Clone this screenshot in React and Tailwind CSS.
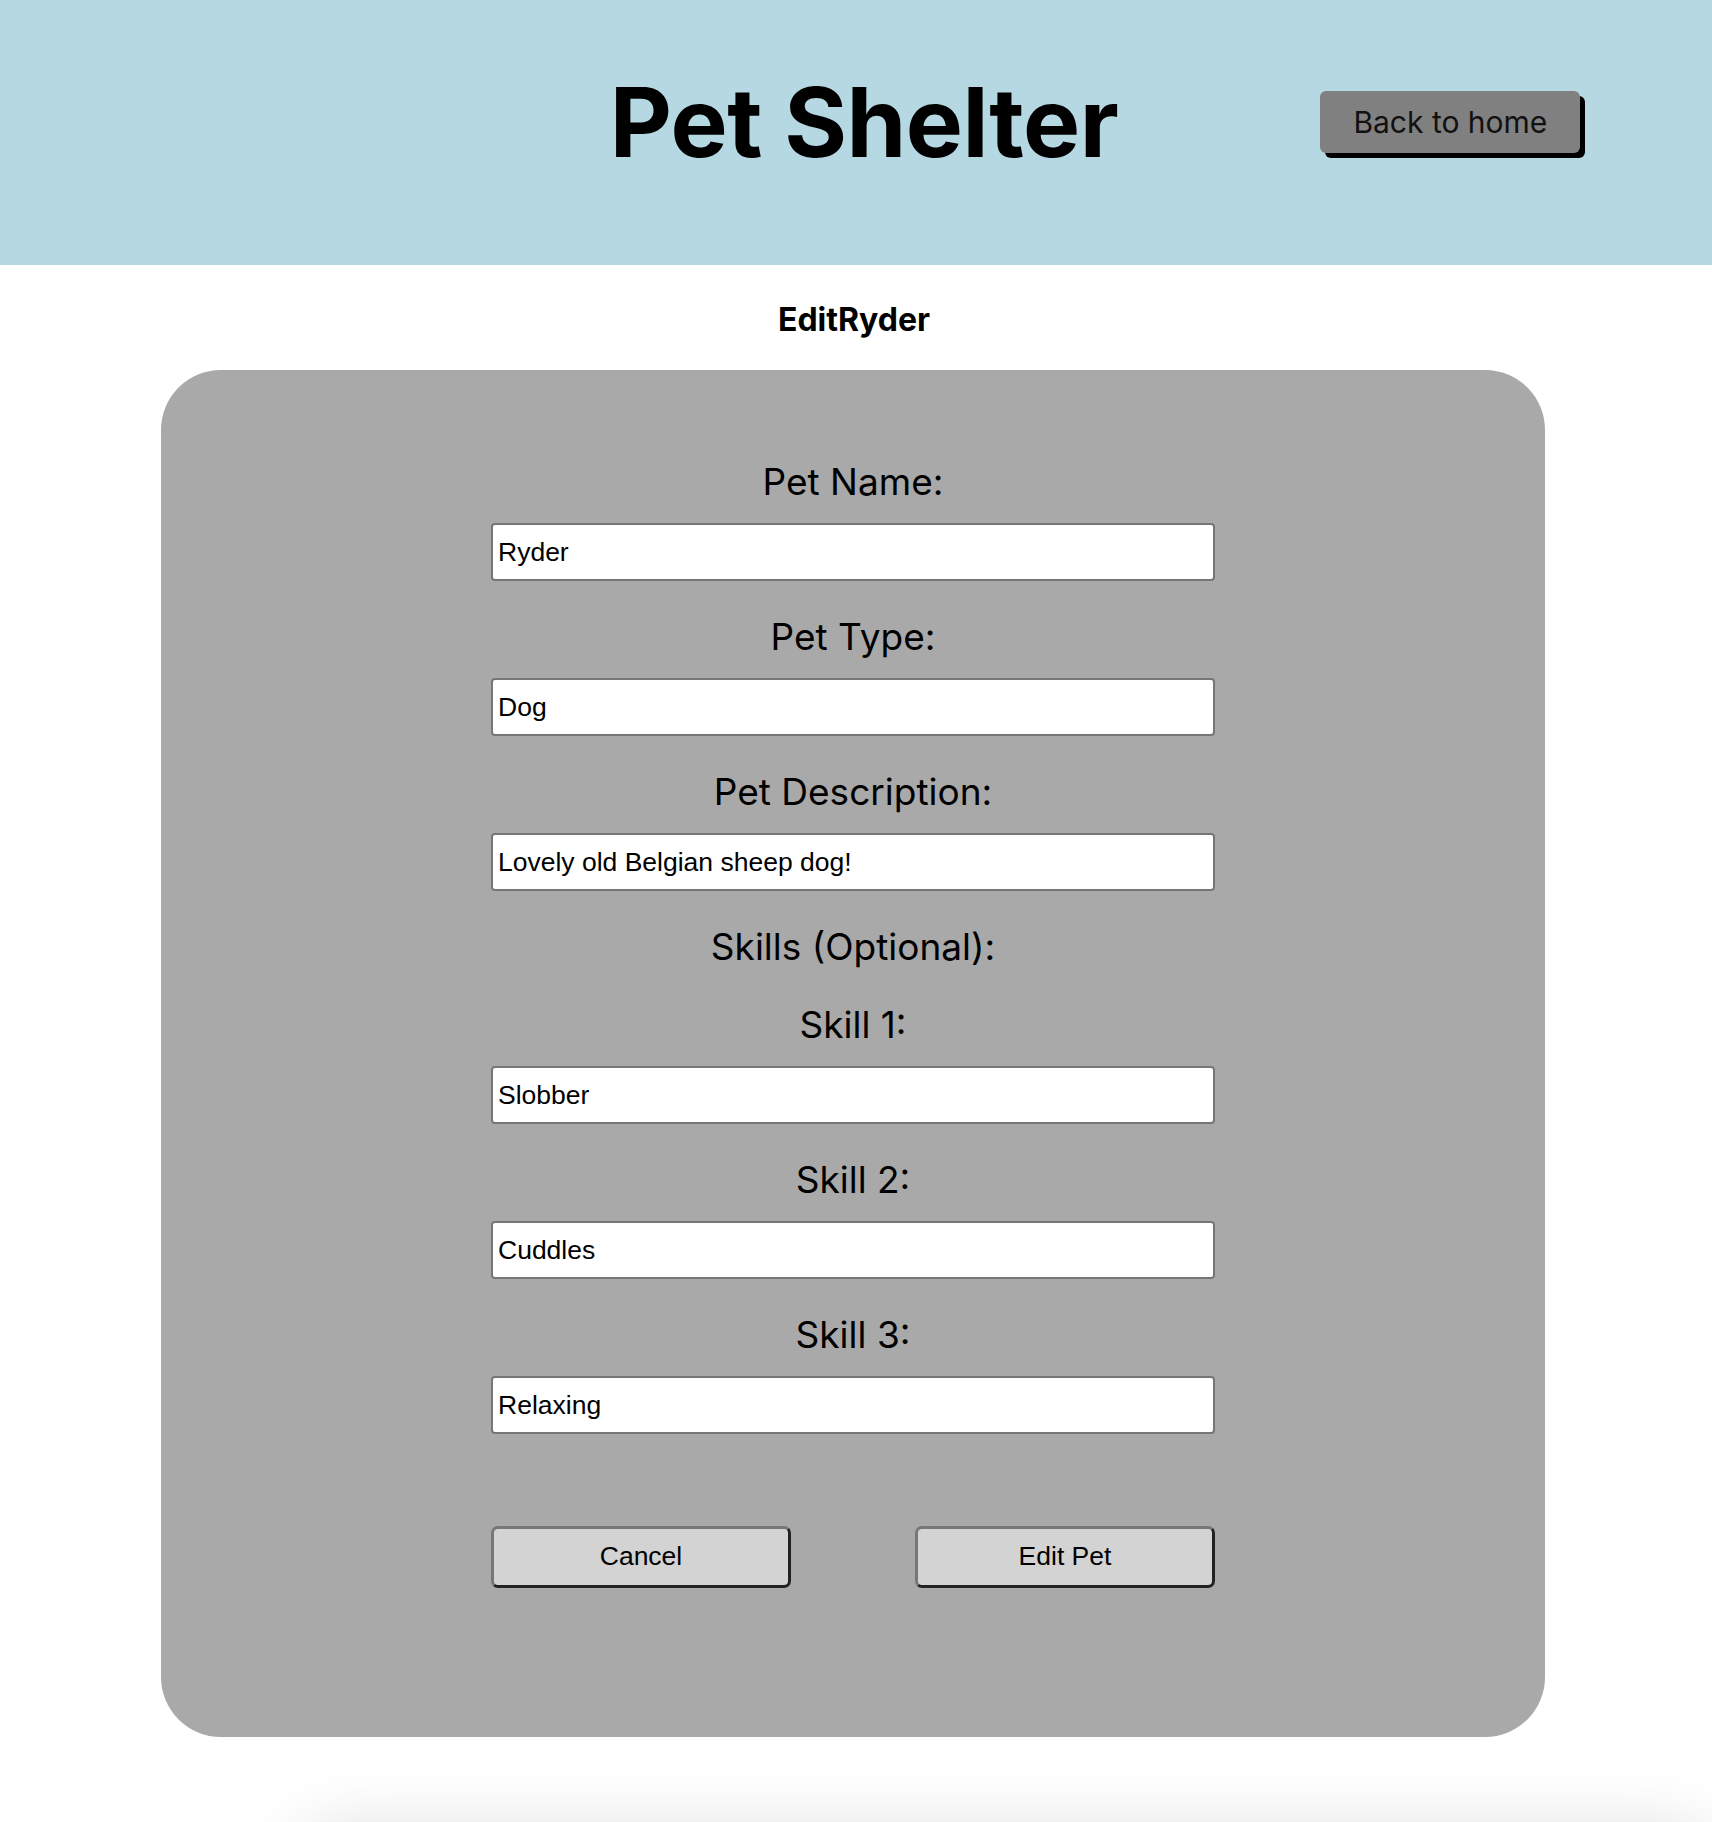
import { useState } from "react";

const fields = [
  { key: "name", label: "Pet Name:", value: "Ryder" },
  { key: "type", label: "Pet Type:", value: "Dog" },
  { key: "description", label: "Pet Description:", value: "Lovely old Belgian sheep dog!" },
];

const skills = [
  { key: "skill1", label: "Skill 1:", value: "Slobber" },
  { key: "skill2", label: "Skill 2:", value: "Cuddles" },
  { key: "skill3", label: "Skill 3:", value: "Relaxing" },
];

function Field({ label, value, onChange, first }) {
  return (
    <div className={`flex flex-col items-center ${first ? "" : "mt-[34px]"}`}>
      <label className="text-[37px] leading-[44px] text-black">{label}</label>
      <input
        type="text"
        value={value}
        onChange={onChange}
        className="mt-[19px] w-[724px] h-[58px] bg-white border-2 border-[#767676] rounded-[4px] px-[5px] text-[26.5px] text-black outline-none"
        style={{ fontFamily: '"Liberation Sans", Arial, sans-serif' }}
      />
    </div>
  );
}

export default function App() {
  const [form, setForm] = useState(() => {
    const init = {};
    [...fields, ...skills].forEach((f) => (init[f.key] = f.value));
    return init;
  });

  const update = (key) => (e) => setForm({ ...form, [key]: e.target.value });

  return (
    <div
      className="h-[1822px] overflow-hidden bg-white"
      style={{ fontFamily: 'Inter, "Noto Sans", sans-serif' }}
    >
      {/* header */}
      <header className="h-[265px] bg-[#b5d8e3] flex items-center pb-[21px] pl-[16px]">
        <div className="flex-1" />
        <h1 className="text-[96px] leading-none font-bold text-black tracking-[-0.5px]">Pet Shelter</h1>
        <div className="flex-1 flex">
          <button className="ml-[202px] w-[260px] h-[62px] bg-[#808080] rounded-[6px] shadow-[5px_5px_0_#000] text-[30px] text-[#111]">
            Back to home
          </button>
        </div>
      </header>

      <h2 className="mt-[35px] mb-[30px] pr-[4px] text-center text-[32px] leading-[40px] font-bold text-black">
        EditRyder
      </h2>

      {/* card */}
      <form
        onSubmit={(e) => e.preventDefault()}
        className="ml-[161px] w-[1384px] h-[1367px] bg-[#a9a9a9] rounded-[60px] pt-[90px] flex flex-col items-center"
      >
        {fields.map((f, i) => (
          <Field key={f.key} label={f.label} value={form[f.key]} onChange={update(f.key)} first={i === 0} />
        ))}

        <p className="mt-[34px] text-[37px] leading-[44px] text-black">Skills (Optional):</p>

        {skills.map((f) => (
          <Field key={f.key} label={f.label} value={form[f.key]} onChange={update(f.key)} first={false} />
        ))}

        <div
          className="mt-[92px] w-[724px] flex justify-between"
          style={{ fontFamily: '"Liberation Sans", Arial, sans-serif' }}
        >
          <button
            type="button"
            className="w-[300px] h-[62px] bg-[#d3d3d3] rounded-[7px] border-[3px] border-t-[#777] border-l-[#777] border-b-[#222] border-r-[#222] text-[26.5px] text-black"
          >
            Cancel
          </button>
          <button
            type="submit"
            className="w-[300px] h-[62px] bg-[#d3d3d3] rounded-[7px] border-[3px] border-t-[#777] border-l-[#777] border-b-[#222] border-r-[#222] text-[26.5px] text-black"
          >
            Edit Pet
          </button>
        </div>
      </form>

      {/* soft shadow of content below the fold */}
      <div className="mt-[95px] ml-[300px] h-[200px] bg-white rounded-[40px] shadow-[0_0_70px_rgba(0,0,0,0.15)]" />
    </div>
  );
}
